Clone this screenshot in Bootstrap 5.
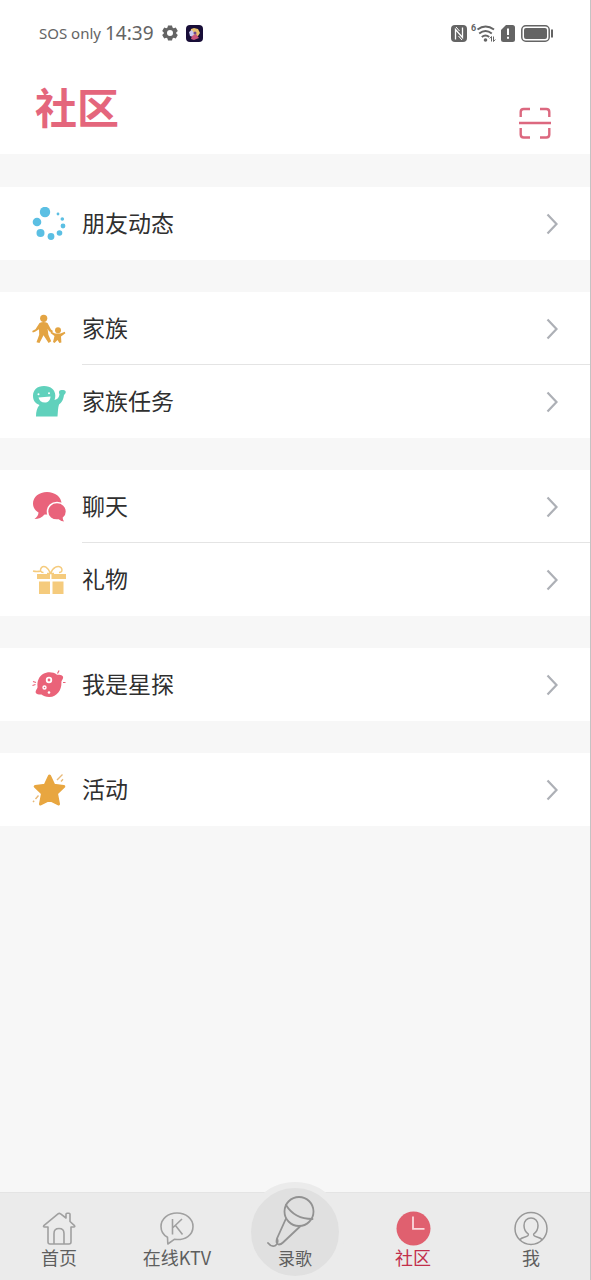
<!DOCTYPE html>
<html lang="zh-CN">
<head>
<meta charset="utf-8">
<meta name="viewport" content="width=device-width, initial-scale=1">
<title>社区</title>
<link href="https://cdn.jsdelivr.net/npm/bootstrap@5.3.0/dist/css/bootstrap.min.css" rel="stylesheet">
<style>
  :root { --rose: #e4667c; --ink: #2f2f2f; --page: #f7f7f7; --bar: #ebebeb; }
  body { font-family: "Noto Sans CJK SC", sans-serif; color: var(--ink); background: var(--page); }
  .screen { border-right: 1px solid #c4c4c4; }
  .status-bar { height: 66px; padding: 0 37px 0 39px; color: #646464; font-family: "Noto Sans", "Noto Sans CJK SC", sans-serif; }
  .carrier { font-size: 15px; line-height: 20px; }
  .clock { font-size: 19px; line-height: 24px; margin-left: 4px; }
  .title-row { height: 88px; padding: 0 38px 0 35px; }
  .page-title { font-size: 42px; line-height: 48px; font-weight: 700; color: var(--rose); margin-top: 16px; }
  .scan-btn { line-height: 0; margin-top: 40px; }
  .menu-group { margin-top: 32px; }
  .menu-group:first-child { margin-top: 33px; }
  .menu-item { height: 73px; padding: 0 31px 0 32px; color: var(--ink); font-size: 23px; line-height: 34px; }
  .menu-item > span { padding-bottom: 3px; }
  .menu-icon { width: 34px; height: 34px; margin-right: 16px; flex: none; }
  .menu-item + .menu-item::before { content: ""; position: absolute; left: 82px; right: 0; top: -1px; height: 1px; background: #e4e4e4; }
  .tab-bar { background: var(--bar); height: 88px; border-top: 1px solid #e4e4e4; }
  .tab-link { color: #5e5e5e; font-size: 18px; line-height: 22px; flex: 1 1 0; padding-top: 17px; }
  .tab-link.active { color: #c22f4b; }
  .record-disc { width: 100px; height: 100px; top: -11px; left: 50%; margin-left: -50px; background: #e0e0e0; border: 6px solid var(--bar); }
  .record-label { font-size: 17px; line-height: 20px; }
</style>
</head>
<body>
<div class="screen min-vh-100 d-flex flex-column">
  <header class="bg-white">
    <div class="status-bar d-flex align-items-center justify-content-between">
      <div class="d-flex align-items-center">
        <span class="carrier">SOS only</span>
        <span class="clock">14:39</span>
        <svg class="ms-2" width="16" height="16" viewBox="0 0 16 16" aria-hidden="true"><path fill="#646464" fill-rule="evenodd" d="M6 .5h4l.5 2.100 1.200.7 2.100-.7 2 3.400-1.600 1.500v1L15.800 10l-2 3.400-2.100-.7-1.200.7L10 15.500H6l-.5-2.100-1.200-.7-2.100.7-2-3.400 1.600-1.500v-1L.2 6l2-3.400 2.100.7 1.200-.7zM8 5a3 3 0 1 0 0 6 3 3 0 0 0 0-6z"/></svg>
        <svg class="ms-2" width="17" height="17" viewBox="0 0 17 17" aria-hidden="true"><rect width="17" height="17" rx="4" fill="#180e38"/><path d="M5 4l3-1 4 1 2 4-2 3-5 1-3-3z" fill="#e9c16d"/><path d="M3 7l3-2 2 3-1 4-3-1z" fill="#c8c9f1"/><path d="M6 11l4-2 3 4-5 2-3-1z" fill="#c9557b"/><circle cx="9" cy="8" r="1.500" fill="#6c478b"/></svg>
      </div>
      <div class="d-flex align-items-center">
        <svg width="16" height="17" viewBox="0 0 16 17" aria-hidden="true"><rect x="0" y="0" width="16" height="17" rx="4" fill="#646464"/><path d="M4.500 14.500V4.500l7 8V2.500" fill="none" stroke="#fff" stroke-width="1.300"/><path d="M5 2l3.500 4M11 15l-3.500-4" stroke="#fff" stroke-width="1"/></svg>
        <svg class="ms-1" width="26" height="19" viewBox="0 0 26 19" aria-hidden="true"><text x="0" y="7" font-size="9" font-family="Roboto, sans-serif" font-weight="700" fill="#646464">6</text><g fill="none" stroke="#646464" stroke-width="2"><path d="M6.500 5.500q8-6 16.500 0"/><path d="M8.200 9.500q6.300-5 12.600 0"/><path d="M10.800 13q3.700-3 7.400 0"/></g><circle cx="14.500" cy="16" r="1.800" fill="#646464"/><path d="M20.500 17.500v-5l-1.800 2M22.500 12.500v5l1.800-2" fill="none" stroke="#646464"/></svg>
        <svg class="ms-1" width="14" height="17" viewBox="0 0 14 17" aria-hidden="true"><path d="M5 0h6.500A2.500 2.500 0 0 1 14 2.500v12a2.500 2.500 0 0 1-2.500 2.500h-9A2.500 2.500 0 0 1 0 14.500V5z" fill="#646464"/><path d="M7 3.500v6.500M7 11.800v2" stroke="#fff" stroke-width="2"/></svg>
        <svg class="ms-1" width="34" height="17" viewBox="-2 0 34 17" aria-hidden="true"><rect x=".8" y=".8" width="27.400" height="15.400" rx="4" fill="none" stroke="#646464" stroke-width="1.500"/><rect x="3" y="3" width="23" height="11" rx="2" fill="#646464"/><path d="M31 4.500v8" stroke="#646464" stroke-width="2"/></svg>
      </div>
    </div>
    <div class="title-row d-flex align-items-start justify-content-between">
      <h1 class="page-title mb-0">社区</h1>
      <button type="button" class="scan-btn btn p-0 border-0" aria-label="扫一扫">
        <svg width="34" height="34" viewBox="0 0 34 34" fill="none" stroke="#dc687f" stroke-width="2.400"><path d="M2.700 11V6q0-3 3-3H12M22 3h6.300q3 0 3 3v5M2.700 22v6.500q0 3 3 3H12M22 31.500h6.300q3 0 3-3V22M1 17h32"/></svg>
      </button>
    </div>
  </header>

  <main class="flex-grow-1">
    <div class="menu-group bg-white">
      <a href="#" class="menu-item position-relative d-flex align-items-center text-decoration-none">
        <svg class="menu-icon" viewBox="0 0 34 34" fill="#5bbfe3" aria-hidden="true"><circle cx="13" cy="5" r="5.200"/><circle cx="5" cy="15" r="4.300"/><circle cx="8.500" cy="26" r="4"/><circle cx="19" cy="29.500" r="3.400"/><circle cx="27.500" cy="26" r="2.800"/><circle cx="31" cy="19" r="2.400"/><circle cx="30.300" cy="12" r="1.800"/><circle cx="26" cy="7" r="1.400"/></svg>
        <span class="flex-grow-1">朋友动态</span>
        <svg width="14" height="22" viewBox="0 0 14 22" fill="none" stroke="#adb0b6" stroke-width="2.200" aria-hidden="true"><path d="M2.500 1.500L11.500 11l-9 9.500"/></svg>
      </a>
    </div>
    <div class="menu-group bg-white">
      <a href="#" class="menu-item position-relative d-flex align-items-center text-decoration-none">
        <svg class="menu-icon" viewBox="0 0 34 34" fill="#e3a443" aria-hidden="true"><circle cx="11.700" cy="6.300" r="3.600"/><path d="M7.500 11q4-2 8 0l3.500 6.500 2 1.500-1 1.600-3-1.400-1.400-2.500.8 6 2.800 6.500-2.600 1.800-5.100-7.700L7.500 31l-3-.7 2.700-7.500-.2-5.500L3 19.700l-2.200.8-.6-1.600 3.300-1.700z"/><circle cx="26" cy="18.300" r="3"/><path d="M19 19.500l4 2h5.500l4.200-1.800.7 1.500-4.400 3.300.4 6-2 .5-1.900-3-3 3-1.500-1 1.500-6-4-3z"/></svg>
        <span class="flex-grow-1">家族</span>
        <svg width="14" height="22" viewBox="0 0 14 22" fill="none" stroke="#adb0b6" stroke-width="2.200" aria-hidden="true"><path d="M2.500 1.500L11.500 11l-9 9.500"/></svg>
      </a>
      <a href="#" class="menu-item position-relative d-flex align-items-center text-decoration-none">
        <svg class="menu-icon" viewBox="0 0 34 34" aria-hidden="true"><path fill="#60d1bc" d="M12 1c7 0 11.300 4 11.300 9.500 0 2-.3 3-.8 4.500 3-.5 4.500-2.500 5-5.500-1.500-3.500.5-5 2.800-4.500 4-.7 4.500 3 1.700 5-.6 5-2.500 7.500-5 9.500-1.200 3.500-1 7-1.500 12H4c0-5 1-8.500 3.500-11.500C3 18.500 1 15 1 11 1 5 5 1 12 1z"/><path fill="#fff" d="M6.500 12.500l12-1c-.2 4-2.700 6-5.700 6-3.300 0-5.600-2-6.300-5z"/><circle cx="6.500" cy="9.300" r="1" fill="#fff"/><circle cx="17" cy="8.300" r="1" fill="#fff"/></svg>
        <span class="flex-grow-1">家族任务</span>
        <svg width="14" height="22" viewBox="0 0 14 22" fill="none" stroke="#adb0b6" stroke-width="2.200" aria-hidden="true"><path d="M2.500 1.500L11.500 11l-9 9.500"/></svg>
      </a>
    </div>
    <div class="menu-group bg-white">
      <a href="#" class="menu-item position-relative d-flex align-items-center text-decoration-none">
        <svg class="menu-icon" viewBox="0 0 34 34" aria-hidden="true"><path fill="#e9637b" d="M15 2C7 2 1 7 1 13.500c0 4 2 7 5.500 9C6.500 25 5 27 2.500 29c4 0 7.500-1.500 10-4.500C22 25 29.500 20.500 29.500 13.500 29.500 7 23 2 15 2z"/><path stroke="#fff" stroke-width="1.600" fill="#e9637b" d="M25 12.500c-5.500 0-9.500 4-9.500 9 0 5.500 4.500 9.200 11 8.500 1.500 1.500 4 2.500 7 2.200-1.500-1.500-2-2.700-2-4.200 2-1.500 3-3.500 3-6.500 0-5-4-9-9.500-9z"/></svg>
        <span class="flex-grow-1">聊天</span>
        <svg width="14" height="22" viewBox="0 0 14 22" fill="none" stroke="#adb0b6" stroke-width="2.200" aria-hidden="true"><path d="M2.500 1.500L11.500 11l-9 9.500"/></svg>
      </a>
      <a href="#" class="menu-item position-relative d-flex align-items-center text-decoration-none">
        <svg class="menu-icon" viewBox="0 0 34 34" aria-hidden="true"><path fill="#f5cb7d" d="M5 11h13v5H5zM19.500 11H34v5H19.500zM7 18.500h11V31H7zM20.500 18.500h11V31h-11z"/><path fill="none" stroke="#f5cb7d" stroke-width="1.500" d="M18.500 10.500C16 4 12 2 9.500 4.500c-2 2.500-1 5 2 5M18.500 10.500C21 4 26 2 29 4.500c2 2.500 1 5-2 5M9 8Q5 9 1 8M15 10.500h7"/></svg>
        <span class="flex-grow-1">礼物</span>
        <svg width="14" height="22" viewBox="0 0 14 22" fill="none" stroke="#adb0b6" stroke-width="2.200" aria-hidden="true"><path d="M2.500 1.500L11.500 11l-9 9.500"/></svg>
      </a>
    </div>
    <div class="menu-group bg-white">
      <a href="#" class="menu-item position-relative d-flex align-items-center text-decoration-none">
        <svg class="menu-icon" viewBox="0 0 34 34" aria-hidden="true"><path fill="#ea6379" d="M11 6c4.500-2.500 10-2.300 14 .7 4.500-.2 6.800 1 6 3.500-.6 1.800-1.800 2.500-1.600 4.500.3 7.500-4.500 14-11.900 14.300-3.500.1-6-.8-8-2.500-4.500.3-6.500-1-5.700-3.500.6-1.800 2-2.500 1.700-4.500C5 13 7 8.500 11 6z"/><circle cx="17" cy="12" r="2.300" fill="none" stroke="#fff" stroke-width="1.800"/><circle cx="12.500" cy="19.500" r="1.500" fill="none" stroke="#fff" stroke-width="1.400"/><circle cx="17" cy="24.500" r="1.300" fill="#fff"/><path fill="none" stroke="#ea6379" stroke-width="1.200" d="M25.500 5.500l1.600-3M31 14.500h2.500M1 13.500l3 1M.5 17.500l3-1"/></svg>
        <span class="flex-grow-1">我是星探</span>
        <svg width="14" height="22" viewBox="0 0 14 22" fill="none" stroke="#adb0b6" stroke-width="2.200" aria-hidden="true"><path d="M2.500 1.500L11.500 11l-9 9.500"/></svg>
      </a>
    </div>
    <div class="menu-group bg-white">
      <a href="#" class="menu-item position-relative d-flex align-items-center text-decoration-none">
        <svg class="menu-icon" viewBox="0 0 34 34" aria-hidden="true"><path fill="#e8a640" stroke="#e8a640" stroke-width="3" stroke-linejoin="round" d="M17.500 3l4.300 9.200 10 1.300-7.300 7 2 10.500-9-4.700L8.500 31l2-10.500-7.300-7 10-1.300z"/><path fill="none" stroke="#e8b978" stroke-width="1.400" d="M25 7l5.500-5.500M29 8.500l2-2.200M1 29l1.200-1.300M3.500 26l3-3.500"/></svg>
        <span class="flex-grow-1">活动</span>
        <svg width="14" height="22" viewBox="0 0 14 22" fill="none" stroke="#adb0b6" stroke-width="2.200" aria-hidden="true"><path d="M2.500 1.500L11.500 11l-9 9.500"/></svg>
      </a>
    </div>
  </main>

  <nav class="tab-bar sticky-bottom d-flex text-center" aria-label="主导航">
    <a href="#" class="tab-link d-flex flex-column align-items-center text-decoration-none">
      <svg width="36" height="36" viewBox="0 0 36 36" fill="none" stroke="#a0a0a0" stroke-width="1.600" stroke-linejoin="round" aria-hidden="true"><path d="M7 17H3.500q-1.500 0-.7-1.300L17 3.800q1.300-.9 2.600 0L25 8V4.200q0-1 1-1h2q1 0 1 1v7.300l4.500 4.200q.8 1.300-.7 1.300H30v15q0 2-2 2H9q-2 0-2-2zM13 34V23.500q0-5 5-5t5 5V34"/></svg>
      <span>首页</span>
    </a>
    <a href="#" class="tab-link d-flex flex-column align-items-center text-decoration-none">
      <svg width="36" height="36" viewBox="0 0 36 36" fill="none" stroke="#a0a0a0" stroke-width="1.600" stroke-linejoin="round" aria-hidden="true"><path d="M18 3C9 3 2 8.700 2 16.500c0 5 2.300 8.500 6.500 10.800L8.800 34l6.500-4.600C26.500 30.500 34 25 34 16.500 34 8.700 27 3 18 3z"/><path d="M13.500 9v15.500M23 9l-9.500 9M16.500 15.500l7 9"/></svg>
      <span>在线KTV</span>
    </a>
    <a href="#" class="tab-link position-relative text-decoration-none">
      <span class="record-disc position-absolute rounded-circle d-flex flex-column align-items-center">
        <svg width="56" height="60" viewBox="0 0 56 60" fill="none" stroke="#929292" stroke-width="1.800" stroke-linecap="round" aria-hidden="true"><circle cx="32" cy="23.500" r="14.500"/><path d="M19 17q8.500 14 26.500 14M19 30.500l-9 20q-1.500 5.500 2 6 2 0 4-2L33 38.500M1 55q3.500 4.500 7.500 2.500 3-1.500 1.800-6.500"/></svg>
        <span class="record-label">录歌</span>
      </span>
    </a>
    <a href="#" class="tab-link active d-flex flex-column align-items-center text-decoration-none" aria-current="page">
      <svg width="36" height="36" viewBox="0 0 36 36" aria-hidden="true"><circle cx="18.500" cy="18.500" r="17" fill="#e0606f"/><path d="M18 6.500v12.300h11.500" fill="none" stroke="#fbd9dd" stroke-width="1.800"/></svg>
      <span>社区</span>
    </a>
    <a href="#" class="tab-link d-flex flex-column align-items-center text-decoration-none">
      <svg width="36" height="36" viewBox="0 0 36 36" fill="none" stroke="#989898" stroke-width="1.500" aria-hidden="true"><circle cx="18" cy="18.500" r="16"/><path d="M6.500 30q1.500-2 5.500-3 4-1 3.300-3-4.300-3-4.300-8.500C11 11 14 8 18 8s7 3 7 7.500q0 5.500-4.300 8.500-.7 2 3.300 3 4 1 5.500 3"/></svg>
      <span>我</span>
    </a>
  </nav>
</div>
<script src="https://cdn.jsdelivr.net/npm/bootstrap@5.3.0/dist/js/bootstrap.bundle.min.js"></script>
</body>
</html>
